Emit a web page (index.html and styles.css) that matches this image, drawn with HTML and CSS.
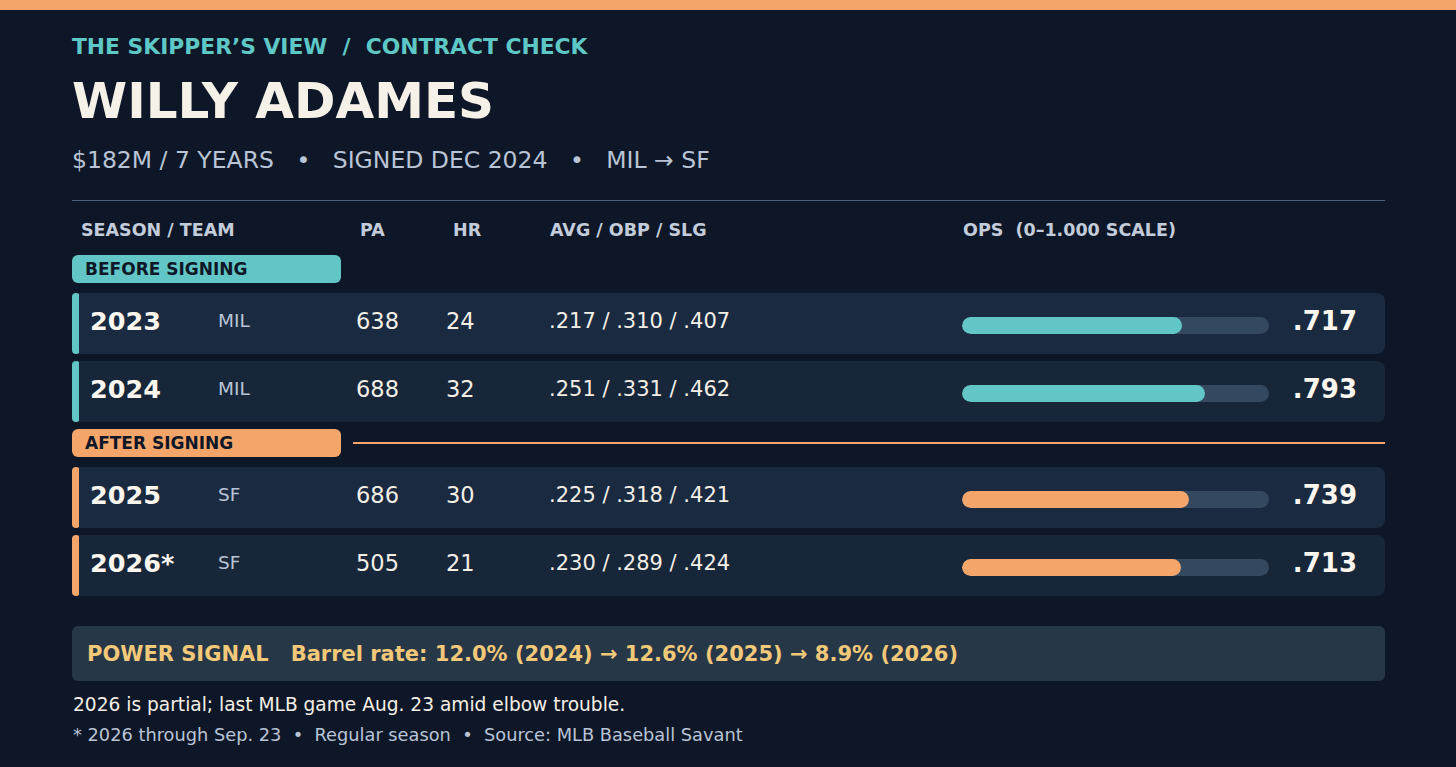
FILE: index.html
```html
<!DOCTYPE html>
<html>
<head>
<meta charset="utf-8">
<link rel="stylesheet" href="styles.css">
</head>
<body>
<div class="topbar"></div>
<main class="page">
  <div class="kicker">THE SKIPPER’S VIEW &nbsp;/&nbsp; CONTRACT CHECK</div>
  <h1 class="title">WILLY ADAMES</h1>
  <div class="sub"><span>$182M / 7 YEARS</span><span class="dot">•</span><span>SIGNED DEC 2024</span><span class="dot">•</span><span>MIL → SF</span></div>
  <div class="rule"></div>
  <div class="head">
    <span>SEASON / TEAM</span><span>PA</span><span>HR</span><span>AVG / OBP / SLG</span><span>OPS &nbsp;(0–1.000 SCALE)</span>
  </div>

  <div class="group-label first"><span class="pill teal">BEFORE SIGNING</span></div>
  <div class="row teal">
    <div class="accent"></div>
    <div class="card light">
      <span class="yr">2023</span><span class="tm">MIL</span><span class="num">638</span><span class="num">24</span><span class="slash">.217 / .310 / .407</span>
      <span class="track"><span class="fill" style="width:71.7%"></span></span><span class="ops">.717</span>
    </div>
  </div>
  <div class="row teal">
    <div class="accent"></div>
    <div class="card dark">
      <span class="yr">2024</span><span class="tm">MIL</span><span class="num">688</span><span class="num">32</span><span class="slash">.251 / .331 / .462</span>
      <span class="track"><span class="fill" style="width:79.3%"></span></span><span class="ops">.793</span>
    </div>
  </div>

  <div class="group-label"><span class="pill orange">AFTER SIGNING</span><span class="gline"></span></div>
  <div class="row orange">
    <div class="accent"></div>
    <div class="card light">
      <span class="yr">2025</span><span class="tm">SF</span><span class="num">686</span><span class="num">30</span><span class="slash">.225 / .318 / .421</span>
      <span class="track"><span class="fill" style="width:73.9%"></span></span><span class="ops">.739</span>
    </div>
  </div>
  <div class="row orange">
    <div class="accent"></div>
    <div class="card dark">
      <span class="yr">2026*</span><span class="tm">SF</span><span class="num">505</span><span class="num">21</span><span class="slash">.230 / .289 / .424</span>
      <span class="track"><span class="fill" style="width:71.3%"></span></span><span class="ops">.713</span>
    </div>
  </div>

  <div class="signal"><span class="sig-k">POWER SIGNAL</span><span class="sig-v">Barrel rate: 12.0% (2024) → 12.6% (2025) → 8.9% (2026)</span></div>
  <p class="note">2026 is partial; last MLB game Aug. 23 amid elbow trouble.</p>
  <p class="foot">* 2026 through Sep. 23 &nbsp;•&nbsp; Regular season &nbsp;•&nbsp; Source: MLB Baseball Savant</p>
</main>
</body>
</html>
```
FILE: styles.css
```css
* { box-sizing: border-box; }
html, body { margin: 0; padding: 0; }
body {
  background: #0e1727;
  font-family: "DejaVu Sans", sans-serif;
  color: #f4efe6;
  width: 1456px;
  height: 767px;
  overflow: hidden;
}
.topbar { height: 10px; background: #f4a66a; }
.page { padding: 0 71px 0 72px; }
.kicker {
  margin-top: 24px;
  font-size: 21.8px;
  font-weight: bold;
  color: #5ec8c6;
  line-height: 26px;
}
.title {
  margin: 11px 0 0;
  font-size: 50px;
  line-height: 60px;
  font-weight: bold;
  color: #f6f1e8;
  letter-spacing: 0;
}
.sub {
  margin-top: 15px;
  font-size: 23.5px;
  line-height: 28px;
  color: #b9c4d6;
  display: flex;
}
.sub .dot { margin: 0 22.5px; }
.rule { margin-top: 26px; height: 1px; background: #4c627c; }
.head {
  display: grid;
  grid-template-columns: 279px 93px 97px 413px 1fr;
  padding-left: 9px;
  margin-top: 19px;
  font-size: 17.5px;
  font-weight: bold;
  color: #c3ccda;
  line-height: 20px;
}
.group-label {
  display: flex;
  align-items: center;
  margin-top: 7px;
  height: 28px;
}
.group-label.first { margin-top: 15px; }
.pill {
  width: 269px;
  height: 28px;
  border-radius: 6px;
  font-size: 17px;
  font-weight: bold;
  color: #0e1727;
  padding-left: 13px;
  line-height: 28px;
}
.pill.teal { background: #62c6c6; }
.pill.orange { background: #f4a66a; }
.gline { flex: 1; height: 1.5px; background: #f4a66a; margin-left: 12px; }
.row {
  display: flex;
  height: 61px;
  margin-top: 7px;
}
.group-label + .row { margin-top: 10px; }
.accent { width: 8px; border-radius: 4px; }
.row.teal .accent, .row.teal .fill { background: #62c6c6; }
.row.orange .accent, .row.orange .fill { background: #f4a66a; }
.card {
  flex: 1;
  display: grid;
  grid-template-columns: 128px 138px 90px 103px 413px 307px 1fr;
  align-items: center;
  padding: 0 28px 6px 11px;
  border-radius: 0 8px 8px 0;
  margin-left: -1px;
}
.card.light { background: #1a2a41; }
.card.dark { background: #172639; }
.yr { font-size: 25.5px; font-weight: bold; color: #fbf7ef; }
.tm { font-size: 18.5px; color: #b9c4d6; }
.num { font-size: 22.5px; color: #f4efe6; }
.slash { font-size: 21px; color: #f4efe6; }
.track {
  display: block;
  height: 17px;
  margin-top: 10px;
  border-radius: 9px;
  background: #34495f;
  overflow: hidden;
}
.fill { display: block; height: 100%; border-radius: 9px; }
.ops { text-align: right; font-size: 26px; font-weight: bold; color: #fbf7ef; }
.signal {
  margin-top: 30px;
  height: 55px;
  border-radius: 6px;
  background: #263748;
  display: flex;
  align-items: center;
  padding-left: 15px;
  font-size: 21px;
  font-weight: bold;
  color: #f2c879;
}
.sig-k { margin-right: 22px; }
.note { margin: 13px 0 0 1px; font-size: 18.6px; line-height: 22px; color: #f4efe6; }
.foot { margin: 8px 0 0 1px; font-size: 17.8px; line-height: 22px; color: #b9c4d6; }
```
